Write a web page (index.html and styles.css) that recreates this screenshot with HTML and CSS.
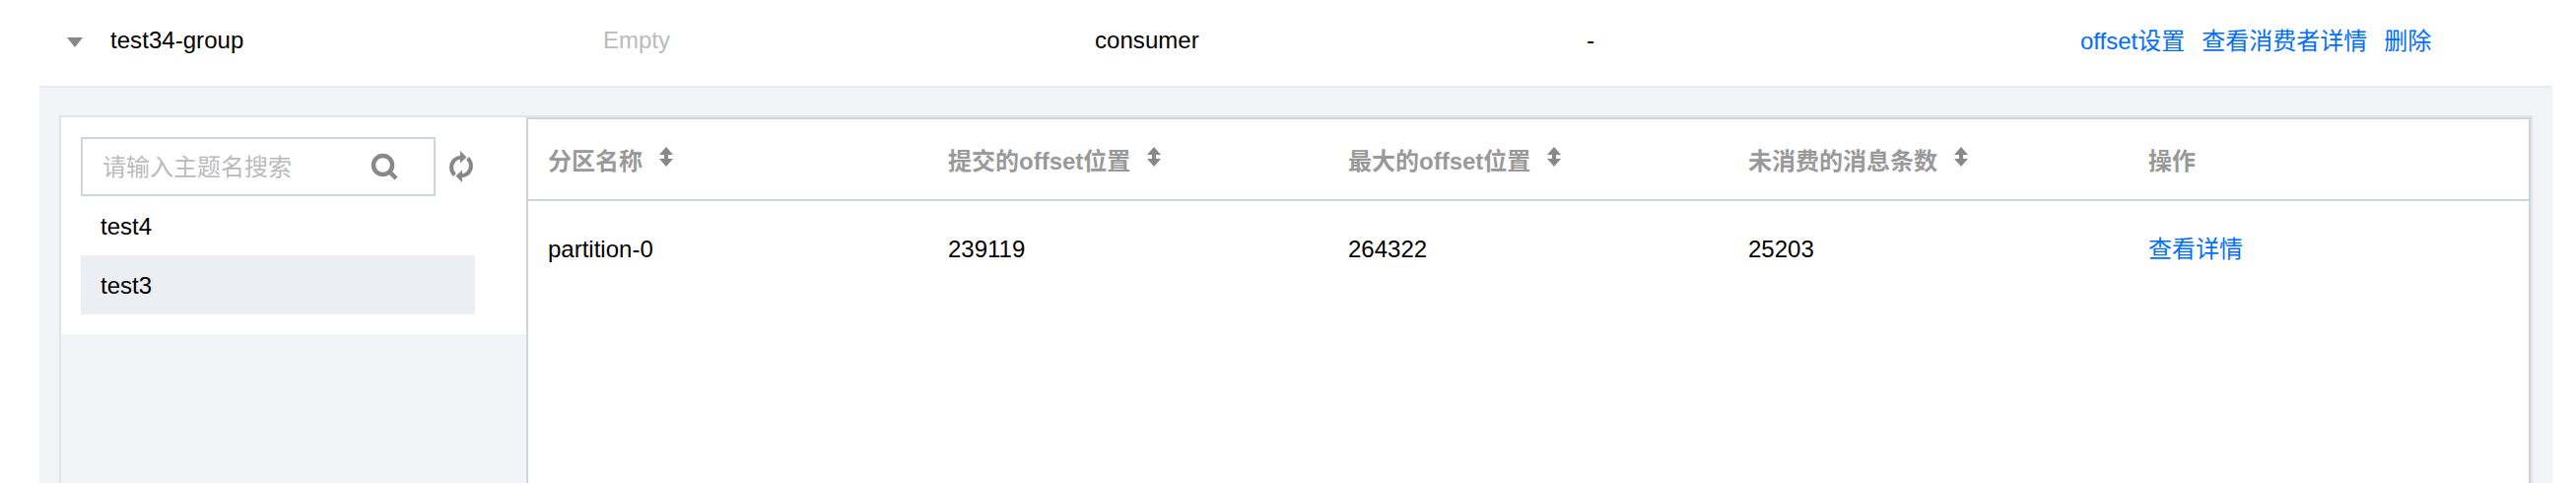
FILE: index.html
```html
<!DOCTYPE html>
<html lang="en">
<head>
    <meta charset="UTF-8">
    <title>Consumer groups</title>
    <link rel="stylesheet" href="styles.css">
</head>
<body>
    <div class="group-row">
        <svg class="caret" width="16" height="10" viewBox="0 0 16 10"><path d="M0 0H16L8 10Z"/></svg>
        <div class="group-name">test34-group</div>
        <div class="group-state">Empty</div>
        <div class="group-type">consumer</div>
        <div class="group-dash">-</div>
        <div class="group-ops">
            <a href="#">offset设置</a>
            <a href="#">查看消费者详情</a>
            <a href="#">删除</a>
        </div>
    </div>

    <div class="detail">
        <div class="detail-inner">
            <div class="topics">
                <div class="search-row">
                    <div class="search">
                        <span class="placeholder">请输入主题名搜索</span>
                        <svg class="search-icon" width="28" height="28" viewBox="0 0 28 28"><circle cx="12.5" cy="12.5" r="9.5"/><path d="M19 19L26 26"/></svg>
                    </div>
                    <svg class="refresh" width="24" height="32" viewBox="0 0 24 32">
                        <path d="M5.5 24.5A10.5 10.5 0 0 1 5 9.5C6.5 8 8.500 7 11 6.600"/>
                        <path d="M18.500 7.500A10.500 10.500 0 0 1 19 22.500C17.500 24 15.500 25 13 25.400"/>
                        <path class="head" d="M11 0L17.500 6.500L11 12.500Z"/>
                        <path class="head" d="M13 19.500L6.500 25.500L13 32Z"/>
                    </svg>
                </div>
                <div class="topic">test4</div>
                <div class="topic active">test3</div>
            </div>

            <div class="partitions">
                <div class="row head-row">
                    <div class="cell">分区名称<svg class="sort" width="16" height="20" viewBox="0 0 16 20"><path d="M8 0L15 8H10V12H15L8 20L1 12H6V8H1Z"/></svg></div>
                    <div class="cell">提交的offset位置<svg class="sort" width="16" height="20" viewBox="0 0 16 20"><path d="M8 0L15 8H10V12H15L8 20L1 12H6V8H1Z"/></svg></div>
                    <div class="cell">最大的offset位置<svg class="sort" width="16" height="20" viewBox="0 0 16 20"><path d="M8 0L15 8H10V12H15L8 20L1 12H6V8H1Z"/></svg></div>
                    <div class="cell">未消费的消息条数<svg class="sort" width="16" height="20" viewBox="0 0 16 20"><path d="M8 0L15 8H10V12H15L8 20L1 12H6V8H1Z"/></svg></div>
                    <div class="cell">操作</div>
                </div>
                <div class="row body-row">
                    <div class="cell">partition-0</div>
                    <div class="cell">239119</div>
                    <div class="cell">264322</div>
                    <div class="cell">25203</div>
                    <div class="cell"><a class="detail-link" href="#">查看详情</a></div>
                </div>
            </div>
        </div>
    </div>
</body>
</html>
```

FILE: styles.css
```css
html, body {height: 100%; margin: 0; overflow: hidden;}
body {display: flex; flex-direction: column; background: #ffffff; color: #000000; font-family: "Liberation Sans", "Noto Sans CJK SC", sans-serif; font-size: 24px;}
a {color: #006eff; text-decoration: none;}

.group-row {display: flex; align-items: center; height: 82px; padding: 0 0 5px 68px; flex: none;}
.caret {fill: #888888; margin: 3px 28px 0 0; flex: none;}
.group-name {width: 500px; letter-spacing: 0.05px;}
.group-state {width: 499px; color: #bbbbbb;}
.group-type {width: 499px; letter-spacing: 0.05px;}
.group-dash {width: 501px;}
.group-ops {display: flex; gap: 17px; margin-top: -3px;}

.detail {flex: 1; min-height: 0; margin: 0 24px 0 40px; padding: 28px 20px 0; background: #f2f4f8; border-top: 2px solid #e9ebef;}
.detail-inner {display: flex; height: 100%; border: 2px solid #e2e4e6; border-bottom: 0; box-sizing: border-box;}

.topics {width: 472px; padding: 20px 0 20px 20px; box-sizing: border-box; background: #ffffff; align-self: flex-start; flex: none;}
.search-row {display: flex; align-items: center;}
.search {display: flex; align-items: center; justify-content: space-between; width: 360px; height: 60px; padding: 0 36px 0 20px; box-sizing: border-box; border: 2px solid #cfd5de;}
.placeholder {color: #bbbbbb; margin-top: -3px;}
.search-icon {fill: none; stroke: #888888; stroke-width: 4.5px;}
.refresh {margin-left: 14px; fill: none; stroke: #888888; stroke-width: 4px;}
.refresh .head {fill: #888888; stroke: none;}
.topic {height: 60px; width: 400px; padding: 2px 0 0 20px; box-sizing: border-box; display: flex; align-items: center;}
.topic.active {background: #ebeef2;}

.partitions {flex: 1; background: #ffffff; border: 2px solid #cfd5de; border-bottom: 0;}
.row {display: grid; grid-template-columns: repeat(5, 406px);}
.cell {padding-left: 20px;}
.head-row {height: 81px; align-items: center; border-bottom: 2px solid #cfd5de; color: #999999; font-weight: bold;}
.head-row .cell {display: flex; align-items: center;}
.sort {fill: #888888; margin: -6px 0 0 16px;}
.body-row {height: 98px; align-items: center;}
.detail-link {display: block; margin-top: -6px;}
```
